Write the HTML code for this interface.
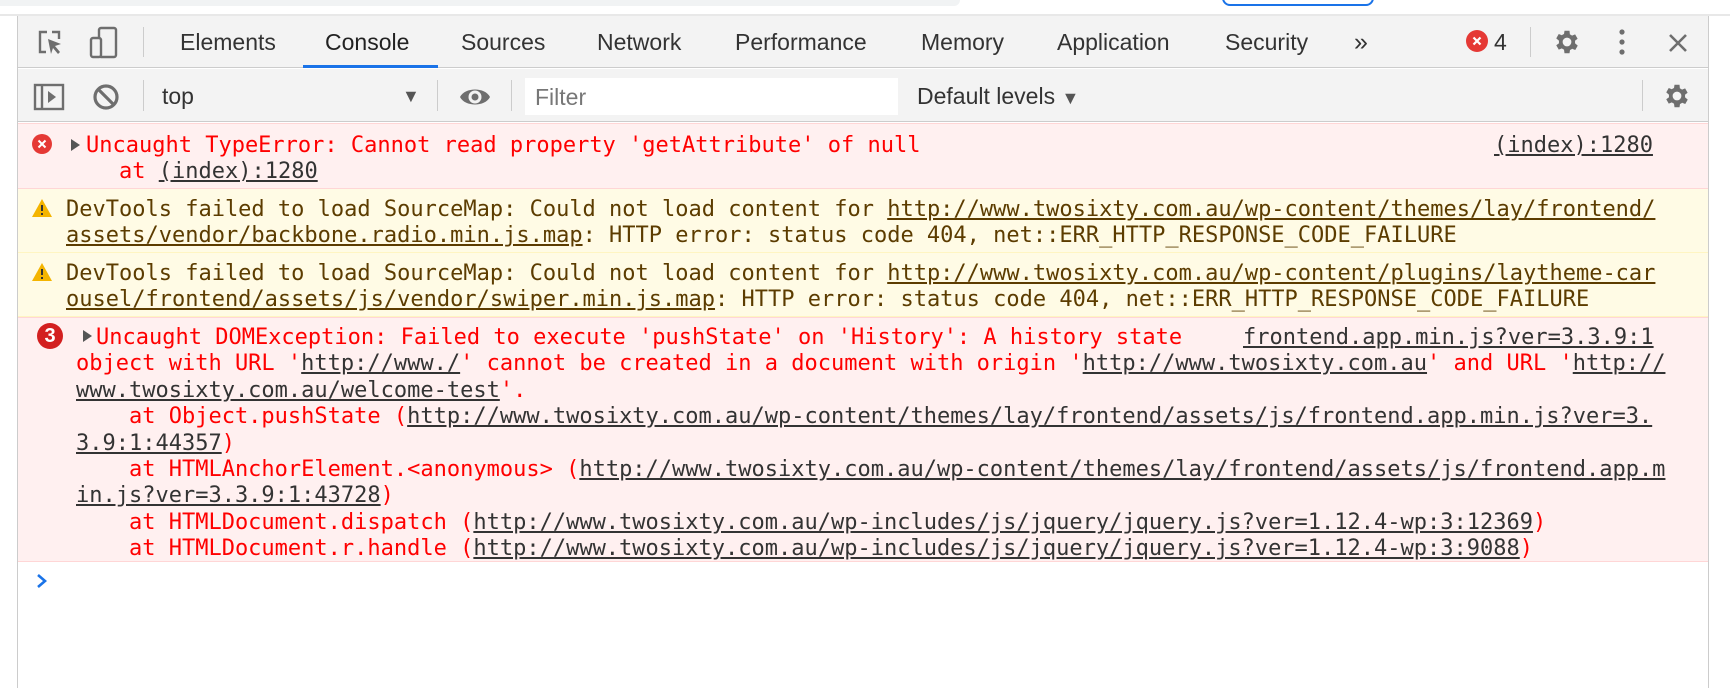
<!DOCTYPE html>
<html><head><meta charset="utf-8"><style>
*{margin:0;padding:0;box-sizing:border-box}
body{width:1730px;height:688px;background:#fff;position:relative;overflow:hidden;font-family:"Liberation Sans",Arial,sans-serif}
.abs{position:absolute}
.tab{position:absolute;top:26px;font-size:23px;color:#333;line-height:32px;white-space:nowrap}
.mono{font-family:"DejaVu Sans Mono","Liberation Mono",monospace;font-size:22px;line-height:26.4px;white-space:pre}
.err{color:#f00}
.lnk{color:#333;text-decoration:underline}
.wl{color:#5c3c00;text-decoration:underline}
.sep{position:absolute;width:1px;background:#ccc}
</style></head><body>
<div class="abs" style="left:0;top:0;width:960px;height:6px;background:#f1f3f4;border-bottom-right-radius:10px"></div>
<div class="abs" style="left:1222px;top:-10px;width:152px;height:16px;border:2px solid #1a73e8;border-radius:10px"></div>
<div class="abs" style="left:0;top:14px;width:1730px;height:2px;background:#e8e8e8"></div>
<div class="abs" style="left:17px;top:16px;width:1px;height:672px;background:#ccc"></div>
<div class="abs" style="left:1708px;top:16px;width:1px;height:672px;background:#ccc"></div>
<div class="abs" style="left:18px;top:16px;width:1690px;height:52px;background:#f3f3f3;border-bottom:1px solid #ccc"></div>
<svg class="abs" style="left:36px;top:28px" width="30" height="30" viewBox="0 0 30 30"><path d="M11 4H4v20h6M16 4h7v7" fill="none" stroke="#6e6e6e" stroke-width="2.4"/><path d="M12 11l13 5-6 2 5 6-2 2-5-6-2 6z" fill="#6e6e6e"/></svg>
<svg class="abs" style="left:88px;top:26px" width="34" height="34" viewBox="0 0 34 34"><rect x="11" y="2" width="17" height="29" rx="2" fill="none" stroke="#6e6e6e" stroke-width="2.4"/><rect x="3" y="12" width="10" height="19" rx="2" fill="#f3f3f3" stroke="#6e6e6e" stroke-width="2.4"/></svg>
<div class="sep" style="left:143px;top:27px;height:30px"></div>
<div class="tab" style="left:180px">Elements</div>
<div class="tab" style="left:325px;color:#222">Console</div>
<div class="abs" style="left:303px;top:65px;width:135px;height:3px;background:#1a73e8"></div>
<div class="tab" style="left:461px">Sources</div>
<div class="tab" style="left:597px">Network</div>
<div class="tab" style="left:735px">Performance</div>
<div class="tab" style="left:921px">Memory</div>
<div class="tab" style="left:1057px">Application</div>
<div class="tab" style="left:1225px">Security</div>
<div class="tab" style="left:1354px;font-size:25px">»</div>
<svg class="abs" style="left:1466px;top:30px" width="22" height="22" viewBox="0 0 22 22"><circle cx="11" cy="11" r="11" fill="#e53935"/><path d="M7.5 7.5l7 7M14.5 7.5l-7 7" stroke="#fff" stroke-width="2.2"/></svg>
<div class="tab" style="left:1494px">4</div>
<div class="sep" style="left:1530px;top:27px;height:30px"></div>
<svg class="abs" style="left:1552px;top:27px" width="30" height="30" viewBox="0 0 24 24"><path fill="#6e6e6e" d="M19.4 13a7.5 7.5 0 000-2l2.1-1.6-2-3.5-2.5 1a7 7 0 00-1.7-1L15 3h-4l-.4 2.6a7 7 0 00-1.7 1l-2.5-1-2 3.5L6.6 11a7.5 7.5 0 000 2l-2.2 1.6 2 3.5 2.5-1c.5.4 1.1.8 1.7 1L11 21h4l.4-2.6c.6-.2 1.2-.6 1.7-1l2.5 1 2-3.5zM13 15.5A3.5 3.5 0 1113 8.5a3.5 3.5 0 010 7z" transform="translate(-1 0)"/></svg>
<svg class="abs" style="left:1616px;top:28px" width="12" height="30" viewBox="0 0 12 30"><circle cx="6" cy="4" r="2.6" fill="#6e6e6e"/><circle cx="6" cy="14" r="2.6" fill="#6e6e6e"/><circle cx="6" cy="24" r="2.6" fill="#6e6e6e"/></svg>
<svg class="abs" style="left:1667px;top:32px" width="22" height="22" viewBox="0 0 22 22"><path d="M3 3l16 16M19 3L3 19" stroke="#6e6e6e" stroke-width="2.6"/></svg>
<div class="abs" style="left:18px;top:69px;width:1690px;height:53px;background:#f3f3f3;border-bottom:1px solid #ccc"></div>
<svg class="abs" style="left:33px;top:83px" width="32" height="28" viewBox="0 0 32 28"><rect x="2" y="2" width="28" height="24" fill="none" stroke="#6e6e6e" stroke-width="2.4"/><path d="M9 2v24" stroke="#6e6e6e" stroke-width="2.4"/><path d="M15 8l8 6-8 6z" fill="#6e6e6e"/></svg>
<svg class="abs" style="left:92px;top:83px" width="28" height="28" viewBox="0 0 28 28"><circle cx="14" cy="14" r="11" fill="none" stroke="#6e6e6e" stroke-width="3.2"/><path d="M6.5 6.5l15 15" stroke="#6e6e6e" stroke-width="3.2"/></svg>
<div class="sep" style="left:143px;top:80px;height:31px"></div>
<div class="tab" style="left:162px;top:80px">top</div>
<div class="tab" style="left:402px;top:80px;font-size:18px;color:#555">▼</div>
<div class="sep" style="left:437px;top:80px;height:31px"></div>
<svg class="abs" style="left:459px;top:84px" width="32" height="26" viewBox="0 0 32 26"><path d="M1 13C6 3 26 3 31 13C26 23 6 23 1 13z" fill="#6e6e6e"/><circle cx="16" cy="13" r="6.5" fill="#f3f3f3"/><circle cx="16" cy="13" r="3.5" fill="#6e6e6e"/></svg>
<div class="sep" style="left:511px;top:80px;height:31px"></div>
<div class="abs" style="left:525px;top:78px;width:373px;height:37px;background:#fff"></div>
<div class="tab" style="left:535px;top:81px;color:#777">Filter</div>
<div class="tab" style="left:917px;top:80px">Default levels <span style="font-size:18px;color:#555">▼</span></div>
<div class="sep" style="left:1642px;top:80px;height:31px"></div>
<svg class="abs" style="left:1662px;top:81px" width="30" height="30" viewBox="0 0 24 24"><path fill="#6e6e6e" d="M19.4 13a7.5 7.5 0 000-2l2.1-1.6-2-3.5-2.5 1a7 7 0 00-1.7-1L15 3h-4l-.4 2.6a7 7 0 00-1.7 1l-2.5-1-2 3.5L6.6 11a7.5 7.5 0 000 2l-2.2 1.6 2 3.5 2.5-1c.5.4 1.1.8 1.7 1L11 21h4l.4-2.6c.6-.2 1.2-.6 1.7-1l2.5 1 2-3.5zM13 15.5A3.5 3.5 0 1113 8.5a3.5 3.5 0 010 7z" transform="translate(-1 0)"/></svg>
<div class="abs" style="left:18px;top:123px;width:1690px;height:66px;background:#fff0f0;border-top:1px solid #ffd6d6;border-bottom:1px solid #ffd6d6"></div>
<svg class="abs" style="left:32px;top:134px" width="20" height="20" viewBox="0 0 20 20"><circle cx="10" cy="10" r="10" fill="#e53935"/><path d="M6.5 6.5l7 7M13.5 6.5l-7 7" stroke="#fff" stroke-width="2"/></svg>
<div class="abs" style="left:71px;top:139px;width:0;height:0;border-left:9px solid #555;border-top:6px solid transparent;border-bottom:6px solid transparent"></div>
<div class="abs mono err" style="left:86px;top:133px">Uncaught TypeError: Cannot read property 'getAttribute' of null</div>
<div class="abs mono err" style="left:119px;top:159.4px">at <span class="lnk">(index):1280</span></div>
<div class="abs mono" style="left:1494px;top:133px"><span class="lnk">(index):1280</span></div>
<div class="abs" style="left:18px;top:189px;width:1690px;height:64px;background:#fffbe5;border-bottom:1px solid #fff5c2"></div>
<svg class="abs" style="left:31px;top:198px" width="22" height="20" viewBox="0 0 22 20"><path d="M11 1L21 19H1z" fill="#f4b400"/><path d="M11 7v6M11 15v2" stroke="#333" stroke-width="2"/></svg>
<div class="abs mono" style="left:66px;top:197px;color:#5c3c00">DevTools failed to load SourceMap: Could not load content for <span class="wl">http://www.twosixty.com.au/wp-content/themes/lay/frontend/</span>
<span class="wl">assets/vendor/backbone.radio.min.js.map</span>: HTTP error: status code 404, net::ERR_HTTP_RESPONSE_CODE_FAILURE</div>
<div class="abs" style="left:18px;top:253px;width:1690px;height:64px;background:#fffbe5;border-bottom:1px solid #fff5c2"></div>
<svg class="abs" style="left:31px;top:262px" width="22" height="20" viewBox="0 0 22 20"><path d="M11 1L21 19H1z" fill="#f4b400"/><path d="M11 7v6M11 15v2" stroke="#333" stroke-width="2"/></svg>
<div class="abs mono" style="left:66px;top:261px;color:#5c3c00">DevTools failed to load SourceMap: Could not load content for <span class="wl">http://www.twosixty.com.au/wp-content/plugins/laytheme-car</span>
<span class="wl">ousel/frontend/assets/js/vendor/swiper.min.js.map</span>: HTTP error: status code 404, net::ERR_HTTP_RESPONSE_CODE_FAILURE</div>
<div class="abs" style="left:18px;top:317px;width:1690px;height:245px;background:#fff0f0;border-top:1px solid #ffd6d6;border-bottom:1px solid #ffd6d6"></div>
<div class="abs" style="left:37px;top:323px;width:26px;height:26px;border-radius:50%;background:#d32020;color:#fff;font:bold 20px/26px 'Liberation Sans',sans-serif;text-align:center">3</div>
<div class="abs" style="left:83px;top:330px;width:0;height:0;border-left:9px solid #555;border-top:6px solid transparent;border-bottom:6px solid transparent"></div>
<div class="abs mono err" style="left:96px;top:325px">Uncaught DOMException: Failed to execute 'pushState' on 'History': A history state</div>
<div class="abs mono" style="left:1243px;top:325px"><span class="lnk">frontend.app.min.js?ver=3.3.9:1</span></div>
<div class="abs mono err" style="left:76px;top:351.4px">object with URL '<span class="lnk">http://www./</span>' cannot be created in a document with origin '<span class="lnk">http://www.twosixty.com.au</span>' and URL '<span class="lnk">http://</span>
<span class="lnk">www.twosixty.com.au/welcome-test</span>'.
    at Object.pushState (<span class="lnk">http://www.twosixty.com.au/wp-content/themes/lay/frontend/assets/js/frontend.app.min.js?ver=3.</span>
<span class="lnk">3.9:1:44357</span>)
    at HTMLAnchorElement.&lt;anonymous&gt; (<span class="lnk">http://www.twosixty.com.au/wp-content/themes/lay/frontend/assets/js/frontend.app.m</span>
<span class="lnk">in.js?ver=3.3.9:1:43728</span>)
    at HTMLDocument.dispatch (<span class="lnk">http://www.twosixty.com.au/wp-includes/js/jquery/jquery.js?ver=1.12.4-wp:3:12369</span>)
    at HTMLDocument.r.handle (<span class="lnk">http://www.twosixty.com.au/wp-includes/js/jquery/jquery.js?ver=1.12.4-wp:3:9088</span>)</div>
<svg class="abs" style="left:36px;top:573px" width="12" height="16" viewBox="0 0 12 16"><path d="M2 2l7 6-7 6" fill="none" stroke="#1a73e8" stroke-width="2.6"/></svg>
</body></html>
